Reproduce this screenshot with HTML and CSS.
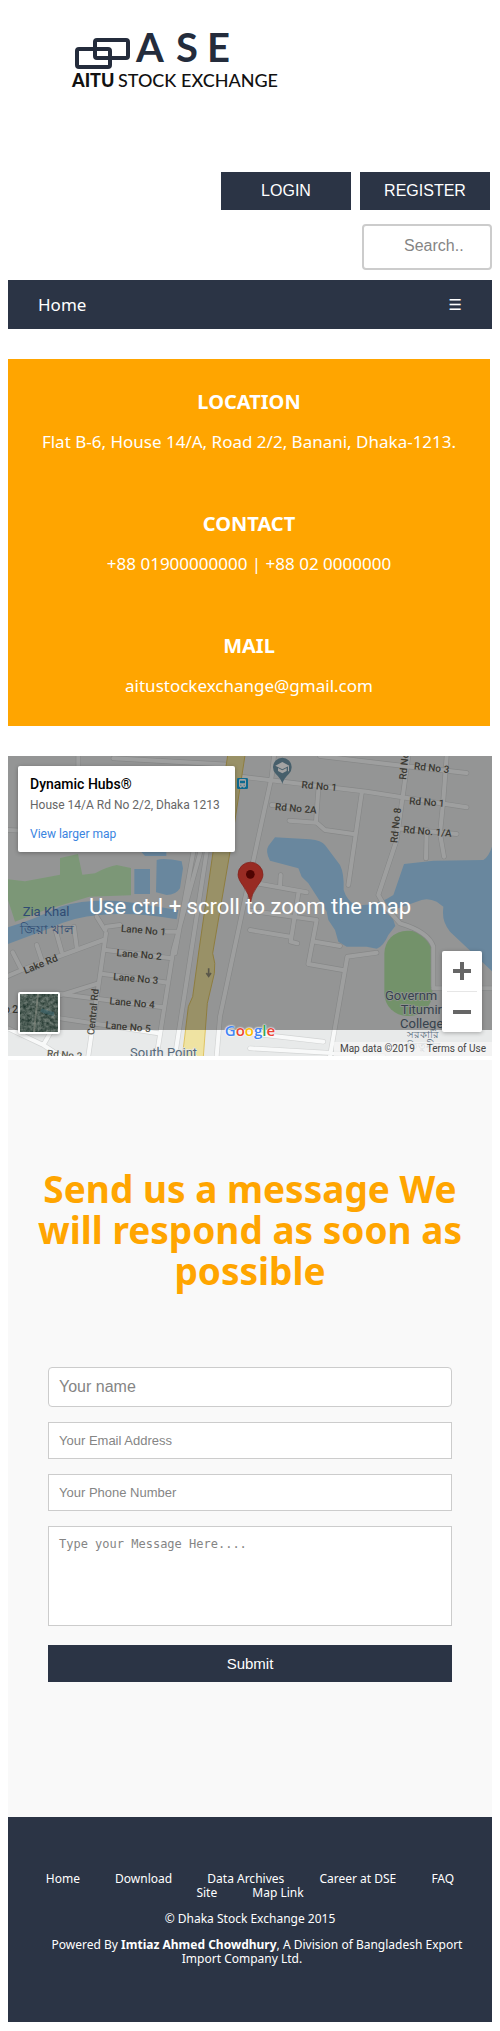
FILE: index.html
```html
<!DOCTYPE html>
<html lang="en">
<head>
<meta charset="utf-8">
<meta name="viewport" content="width=device-width, initial-scale=1">
<title>AITU Stock Exchange - Contact</title>
<link rel="stylesheet" href="styles.css">
</head>
<body>
<header class="header">
  <svg class="logo" width="240" height="80" viewBox="60 20 240 80" role="img" aria-label="AITU Stock Exchange">
    <g fill="none" stroke="#242c3c" stroke-width="4">
      <rect x="95" y="40" width="33" height="18" rx="2"/>
      <rect x="77" y="49" width="33" height="18" rx="2"/>
    </g>
    <text class="logo-main" x="136 176 207" y="62">ASE</text>
    <text class="logo-bold" x="72" y="87">AITU</text>
    <text class="logo-sub" x="118" y="87">STOCK</text>
    <text class="logo-sub" x="181" y="87">EXCHANGE</text>
  </svg>
  <div class="actions">
    <button class="btn" type="button">LOGIN</button>
    <button class="btn" type="button">REGISTER</button>
  </div>
  <input class="search" type="text" placeholder="Search.." aria-label="Search">
</header>
<nav class="nav">
  <a href="#">Home</a>
  <a class="nav-menu" href="#" aria-label="Menu">☰</a>
</nav>
<section class="info">
  <div class="info-item"><h2>LOCATION</h2><p>Flat B-6, House 14/A, Road 2/2, Banani, Dhaka-1213.</p></div>
  <div class="info-item"><h2>CONTACT</h2><p>+88 01900000000 | +88 02 0000000</p></div>
  <div class="info-item"><h2>MAIL</h2><p>aitustockexchange@gmail.com</p></div>
</section>
<section class="map" aria-label="Map">
  <svg class="map-canvas" viewBox="24 48 1452 900" preserveAspectRatio="xMidYMid slice">
    <rect x="-1000" y="48" width="3500" height="900" fill="#e8eaea"/>
    <!-- parks -->
    <path fill="#c3edbb" d="M24 418 75 424 180 404V354L234 342 247 404 285 400Q320 380 350 375L393 384V466L268 470 130 512 45 545 24 480Z"/>
    <rect x="1153" y="572" width="144" height="256" rx="68" fill="#b5e5a7"/>
    <!-- water -->
    <g fill="#a5d4f7">
      <path d="M24 562Q110 535 180 500 280 470 400 488L535 510 530 538Q400 515 300 525 220 530 150 565L24 612Z"/>
      <path d="M403 387H450V462H403ZM470 360Q490 352 545 364L549 385 540 445Q528 465 500 465L468 457ZM424 336H499V348H435Z"/>
      <path d="M825 292 930 298Q965 302 975 315L1020 375Q1033 400 1031 450 1040 480 1065 495 1130 500 1180 465L1212 372 1300 362 1450 360Q1466 350 1476 320V694L1350 575 1340 560Q1325 535 1330 500L1310 485Q1280 470 1250 485L1180 510Q1175 530 1186 558L1165 585Q1150 620 1130 626L1100 620H1040L1015 605 1005 570 985 540 980 515 925 430 905 410 895 385 810 362Q795 335 805 318Z"/>
    </g>
    <!-- street edges and streets -->
    <g fill="none" stroke-linejoin="round" stroke-linecap="round">
      <g stroke="#d2d4d4" stroke-width="16">
        <use href="#lines"/>
      </g>
      <g stroke="#f8f9f9" stroke-width="12">
        <g id="lines">
          <path d="M24 270 120 275M235 48V100M340 55 700 75M24 708 65 690 310 600M65 690 38 637M125 660 110 615M185 635 168 575M230 620 222 560M290 530 315 570 320 560 360 555M318 580 295 740 265 948M500 575H530M318 630 515 655M310 702 505 728M180 762 490 802M180 835 475 880M295 730 24 815M24 865 130 915 180 948M130 915 150 880M590 200 600 340 520 630 470 948M620 336 525 948M580 336 525 640"/>
          <path d="M650 948 660 830 745 430 815 110 822 48M724 110 1100 155 1400 202M960 48 1160 72 1400 99M815 195 870 200M955 150 948 245M868 242 950 248 975 270 1060 282M1085 160 1045 435M1225 48 1190 300 1135 465 1155 500 1200 550Q1285 575 1300 620V740M1340 48 1330 180 1320 280 1332 350M1280 270 1278 355M1190 265 1370 282M770 430 920 457M842 405 840 440M895 460 872 605 892 610M750 512 950 540 925 672 1028 690M750 570 870 590M945 605 1020 618M1130 638 1042 650 990 948M1300 745H1476M750 880 970 905M750 925 1150 948"/>
        </g>
      </g>
    </g>
    <!-- avenue -->
    <path fill="#efe3a2" stroke="#dfc463" stroke-width="3" d="M684 40H736L690 336 638 640Q648 670 643 700L622 790 610 950H547L565 800 578 770 597 630 640 330Z"/>
    <path d="M626 685V708M619 699 626 709 633 699" fill="none" stroke="#8d8974" stroke-width="5"/>
    <g class="street-name">
      <text x="362" y="575" transform="rotate(5 362 575)">Lane No 1</text>
      <text x="349" y="648" transform="rotate(5 349 648)">Lane No 2</text>
      <text x="339" y="720" transform="rotate(5 339 720)">Lane No 3</text>
      <text x="328" y="793" transform="rotate(5 328 793)">Lane No 4</text>
      <text x="316" y="865" transform="rotate(5 316 865)">Lane No 5</text>
      <text x="76" y="702" transform="rotate(-22 76 702)">Lake Rd</text>
      <text x="282" y="886" transform="rotate(-84 282 886)">Central Rd</text>
      <text x="54" y="819" text-anchor="end">No 2</text>
      <text x="140" y="950" transform="rotate(5 140 950)">Rd No 2</text>
      <text x="904" y="144" transform="rotate(5 904 144)">Rd No 1</text>
      <text x="824" y="210" transform="rotate(5 824 210)">Rd No 2A</text>
      <text x="1241" y="88" transform="rotate(6 1241 88)">Rd No 3</text>
      <text x="1227" y="193" transform="rotate(4 1227 193)">Rd No 1</text>
      <text x="1209" y="278" transform="rotate(5 1209 278)">Rd No. 1/A</text>
      <text x="1192" y="310" transform="rotate(-84 1192 310)">Rd No 8</text>
      <text x="1218" y="120" transform="rotate(-84 1218 120)">Rd No 8</text>
    </g>
    <g class="place-name">
      <text x="390" y="950">South Point</text>
      <text x="1155" y="781">Governm</text>
      <text x="1202" y="823">Titumir</text>
      <text x="1200" y="865">College</text>
      <text class="place-small" x="1220" y="895">সরকারি</text>
      <text class="place-small" x="1220" y="928">তিতুমীর</text>
    </g>
    <g class="water-name">
      <text x="68" y="528">Zia Khal</text>
      <text x="60" y="581">জিয়া খাল</text>
    </g>
    <!-- bus stop -->
    <rect x="711" y="114" width="33" height="33" rx="4" fill="#17a7e0"/>
    <path fill="#fff" fill-rule="evenodd" d="M717 121q0-4 4-4h13q4 0 4 4v19h-4v3h-4v-3h-6v3h-4v-3h-3ZM720 122v8h15v-8ZM721 134v3h3v-3ZM731 134v3h3v-3Z"/>
    <!-- college pin -->
    <path fill="#6f95a8" d="M847 132Q844 117 827 101A28 28 0 1 1 867 101Q850 117 847 132Z"/>
    <path fill="#fff" d="M847 66 868 77 847 88 826 77ZM834 84 847 91 860 84V93L847 100 834 93ZM864 79H867V94H864Z"/>
    <rect x="-1000" y="48" width="3500" height="822" fill="#000" opacity=".36"/>
    <!-- selected place -->
    <path fill="#982b23" stroke="#801d17" stroke-width="2" d="M751 490Q748 462 729 437 714 417 714 404A37 37 0 0 1 789 404Q789 417 773 437 754 462 751 490Z"/>
    <circle cx="751" cy="403" r="13" fill="#4f0402"/>
  </svg>
  <div class="place-card">
    <strong>Dynamic Hubs®</strong>
    <span>House 14/A Rd No 2/2, Dhaka 1213</span>
    <a href="#">View larger map</a>
  </div>
  <p class="map-hint">Use ctrl + scroll to zoom the map</p>
  <button class="satellite" type="button" aria-label="Satellite view">
    <svg viewBox="0 0 38 38">
      <defs><filter id="ground" x="0" y="0" width="1" height="1" color-interpolation-filters="sRGB"><feTurbulence type="fractalNoise" baseFrequency=".28" numOctaves="4" seed="8"/><feColorMatrix values=".5 0 0 0 .05  .45 0 0 0 .14  .45 0 0 0 .11  0 0 0 0 1"/></filter></defs>
      <rect width="38" height="38" filter="url(#ground)"/>
      <path d="M18 0 14 38" stroke="#8b9086" stroke-width="2" opacity=".6"/>
      <path d="M21 16Q27 19 34 20" fill="none" stroke="#3d6770" stroke-width="4" opacity=".6"/>
    </svg>
  </button>
  <div class="zoom-box">
    <button type="button" aria-label="Zoom in"><svg viewBox="0 0 18 18"><path d="M9 0V18M0 9H18"/></svg></button>
    <button type="button" aria-label="Zoom out"><svg viewBox="0 0 18 18"><path d="M0 9H18"/></svg></button>
  </div>
  <div class="google" aria-label="Google"><i class="b">G</i><i class="r">o</i><i class="y">o</i><i class="b">g</i><i class="g">l</i><i class="r">e</i></div>
  <div class="map-terms"><span>Map data ©2019</span><a href="#">Terms of Use</a></div>
</section>
<section class="message">
  <h1>Send us a message We will respond as soon as possible</h1>
  <form class="form">
    <input class="field field-name" type="text" placeholder="Your name" aria-label="Your name">
    <input class="field" type="email" placeholder="Your Email Address" aria-label="Your Email Address">
    <input class="field" type="tel" placeholder="Your Phone Number" aria-label="Your Phone Number">
    <textarea class="field field-text" placeholder="Type your Message Here...." aria-label="Message"></textarea>
    <button class="submit" type="submit">Submit</button>
  </form>
</section>
<footer class="footer">
  <div class="footer-links">
    <a href="#">Home</a>
    <a href="#">Download</a>
    <a href="#">Data Archives</a>
    <a href="#">Career at DSE</a>
    <a href="#">FAQ</a>
    <a href="#">Site</a>
    <a href="#">Map Link</a>
  </div>
  <p>© Dhaka Stock Exchange 2015</p>
  <p class="powered">Powered By <b>Imtiaz Ahmed Chowdhury</b>, A Division of Bangladesh Export Import Company Ltd.</p>
</footer>
</body>
</html>
```

FILE: styles.css
```css
* { box-sizing: border-box; }
body {
  margin: 8px;
  background: #fff;
  font-family: "Lucida Sans", "Noto Sans", sans-serif;
  font-size: 17px;
}
a { color: inherit; text-decoration: none; }
button { border: 0; padding: 0; cursor: pointer; }

.header { display: flex; flex-direction: column; align-items: flex-end; padding: 12px 0 10px; }
.logo { align-self: flex-start; margin: 0 0 72px 52px; }
.logo text { font-family: Lato, sans-serif; }
.logo .logo-main { font-size: 40px; font-weight: 700; fill: #242c3c; }
.logo .logo-bold { font-size: 18px; font-weight: 900; fill: #111; }
.logo .logo-sub { font-size: 18px; font-weight: 500; fill: #111; }
.actions { display: flex; gap: 9px; margin-right: 2px; }
.btn {
  width: 130px;
  height: 38px;
  background: #2b3445;
  color: #fff;
  font: 16px "Liberation Sans", Arial, sans-serif;
}
.search {
  width: 130px;
  height: 46px;
  margin-top: 14px;
  padding: 10px 20px 12px 40px;
  border: 2px solid #ccc;
  border-radius: 4px;
  font: 16px "Liberation Sans", Arial, sans-serif;
}
::placeholder { color: #858585; }

.nav {
  display: flex;
  justify-content: space-between;
  align-items: center;
  height: 49px;
  padding: 0 30px;
  background: #2b3445;
  color: #fff;
}
.nav-menu { font-family: "DejaVu Sans", sans-serif; font-size: 15px; }

.info {
  margin: 30px 2px 30px 0;
  padding: 29px 16px 28px;
  background: #ffa500;
  color: #fff;
  text-align: center;
}
.info-item + .info-item { margin-top: 56px; }
.info h2 { margin: 0 0 14px; font-size: 20px; line-height: 28px; }
.info p { margin: 0; line-height: 24px; }

.map { position: relative; height: 300px; overflow: hidden; font-family: Roboto, sans-serif; }
.map-canvas { display: block; width: 100%; height: 100%; }
.street-name { font-size: 30px; font-weight: 500; fill: #5c5a50; }
.place-name { font-size: 39px; fill: #56697a; stroke: #e8eaea; stroke-width: 4px; paint-order: stroke; }
.place-small { font-size: 30px; }
.water-name { font-size: 39px; fill: #4c77b5; }
.place-card {
  position: absolute;
  top: 10px;
  left: 10px;
  display: flex;
  flex-direction: column;
  width: 217px;
  height: 86px;
  padding: 8px 12px;
  border-radius: 2px;
  background: #fff;
  box-shadow: 0 1px 4px rgba(0, 0, 0, .3);
  color: #666;
  font-size: 12px;
  line-height: 18px;
  white-space: nowrap;
}
.place-card strong { color: #000; font-size: 14px; font-weight: 500; line-height: 20px; }
.place-card span { margin: 2px 0 11px; }
.place-card a { color: #3a84df; }
.map-hint {
  position: absolute;
  top: 138px;
  right: 0;
  left: 0;
  margin: 0;
  color: #fff;
  font-size: 22px;
  line-height: 26px;
  text-align: center;
}
.satellite {
  position: absolute;
  left: 10px;
  bottom: 22px;
  width: 42px;
  height: 42px;
  border: 2px solid #fff;
  border-radius: 2px;
  box-shadow: 0 1px 4px rgba(0, 0, 0, .3);
}
.satellite svg { display: block; }
.zoom-box {
  position: absolute;
  right: 10px;
  bottom: 24px;
  width: 40px;
  padding: 0 5px;
  border-radius: 2px;
  background: #fff;
  box-shadow: 0 1px 4px rgba(0, 0, 0, .3);
}
.zoom-box button { display: grid; place-items: center; width: 100%; height: 40px; background: none; }
.zoom-box button + button { border-top: 1px solid #e6e6e6; height: 41px; }
.zoom-box svg { width: 18px; height: 18px; fill: none; stroke: #666; stroke-width: 4; }
.google {
  position: absolute;
  right: 0;
  bottom: 16px;
  left: 0;
  font: 600 15px/20px "Open Sans", sans-serif;
  text-align: center;
  text-shadow: 0 0 1px #fff, 0 0 2px #fff, 0 0 2px #fff;
}
.google i { font-style: normal; }
.google .b { color: #4285f4; }
.google .r { color: #ea4335; }
.google .y { color: #fbbc05; }
.google .g { color: #34a853; }
.map-terms {
  position: absolute;
  right: 0;
  bottom: 0;
  display: flex;
  gap: 12px;
  padding: 0 6px;
  background: rgba(245, 245, 245, .8);
  color: #444;
  font-size: 10px;
  line-height: 14px;
}

.message { margin-top: 4px; padding: 108px 24px 135px; background: #f9f9f9; }
.message h1 {
  margin: 0 0 76px;
  color: #ffa500;
  font-size: 37px;
  line-height: 41px;
  text-align: center;
}
.form { display: flex; flex-direction: column; gap: 15px; margin: 0 16px; }
.field {
  width: 100%;
  height: 37px;
  padding: 10px;
  border: 1px solid #ccc;
  background: #fff;
  font: 13px "Liberation Sans", Arial, sans-serif;
}
.field-name { height: 40px; border-radius: 4px; font-size: 16px; }
.field-text { display: block; height: 100px; resize: none; font-family: "DejaVu Sans Mono", monospace; font-size: 12px; }
.submit {
  height: 37px;
  margin-top: 4px;
  background: #2b3445;
  color: #fff;
  font: 15px "Liberation Sans", Arial, sans-serif;
}

.footer {
  padding: 55px 8px 56px;
  background: #2b3445;
  color: #fff;
  font-size: 12px;
  line-height: 14px;
  text-align: center;
}
.footer-links a { display: inline-block; margin: 0 16px; }
.footer p { margin: 12px 0 0; }
.footer .powered { padding-right: 16px; text-indent: 30px; }
```
